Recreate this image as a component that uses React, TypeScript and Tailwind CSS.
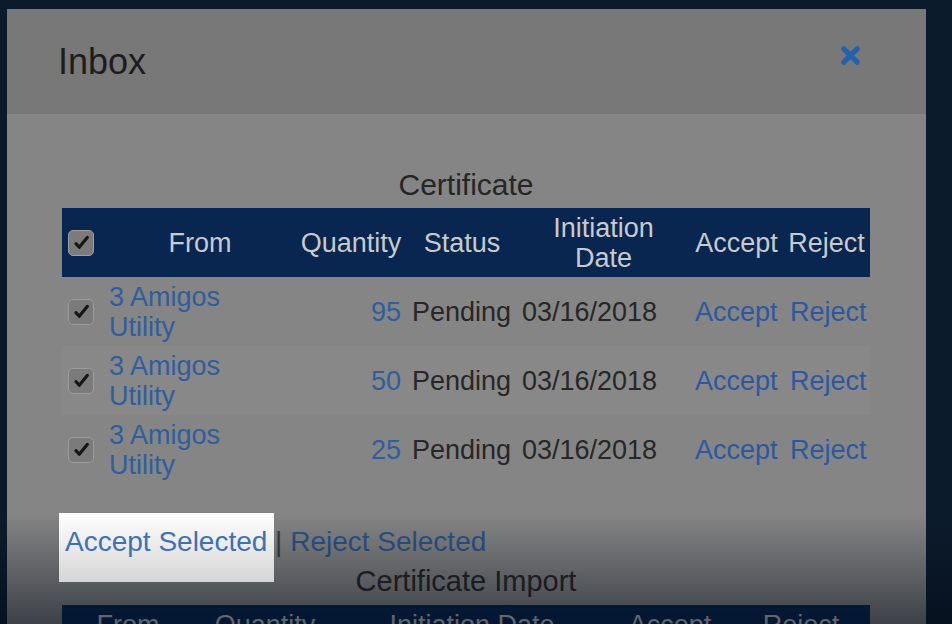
import React from "react";

function Check() {
  return (
    <svg viewBox="0 0 24 24" className="h-[19px] w-[19px]">
      <path
        d="M5 13.5l4.2 4.5L19.5 5.5"
        fill="none"
        stroke="#161616"
        strokeWidth="4"
        strokeLinecap="round"
        strokeLinejoin="round"
      />
    </svg>
  );
}

function Box() {
  return (
    <span className="flex h-[26px] w-[26px] items-center justify-center rounded-[5px] border border-[#9d9d9d] bg-[#7b7b7b]">
      <Check />
    </span>
  );
}

const rows = [95, 50, 25];

export default function App() {
  return (
    <div className="relative h-[624px] w-[952px] overflow-hidden bg-[#0c1b2c] pl-[7px] pt-[9px] font-['Liberation_Sans',Arial,sans-serif]">
      <div className="w-[919px] bg-[#858585]">
        {/* header */}
        <div className="flex h-[105px] items-center justify-between bg-[#787878] pl-[51px] pr-[64px]">
          <span className="text-[36px] leading-[40px] text-[#1d1d1d]">Inbox</span>
          <svg viewBox="0 0 24 24" className="mb-[13px] h-[23px] w-[23px]">
            <path
              d="M5 5L19 19M19 5L5 19"
              fill="none"
              stroke="#2461aa"
              strokeWidth="5.5"
              strokeLinecap="round"
            />
          </svg>
        </div>

        {/* body */}
        <div className="pl-[55px] pr-[56px] pt-[56px]">
          <div className="w-[808px] text-center text-[30px] leading-[30px] text-[#262626]">Certificate</div>
          <table className="mt-[8px] w-[808px] table-fixed border-collapse text-[27px] leading-[30px]">
            <colgroup>
              <col className="w-[43px]" />
              <col className="w-[190px]" />
              <col className="w-[112px]" />
              <col className="w-[110px]" />
              <col className="w-[173px]" />
              <col className="w-[93px]" />
              <col className="w-[87px]" />
            </colgroup>
            <thead>
              <tr className="h-[69px] bg-[#082650] text-[#c9cacc]">
                <th className="pl-[6px] text-left font-normal">
                  <Box />
                </th>
                <th className="font-normal">From</th>
                <th className="font-normal">Quantity</th>
                <th className="font-normal">Status</th>
                <th className="font-normal">
                  Initiation
                  <br />
                  Date
                </th>
                <th className="font-normal">Accept</th>
                <th className="font-normal">Reject</th>
              </tr>
            </thead>
            <tbody>
              {rows.map((q, i) => (
                <tr key={i} className={`h-[69px] ${i === 1 ? "bg-[#888888]" : ""}`}>
                  <td className="pl-[6px]">
                    <Box />
                  </td>
                  <td className="pl-[4px] pr-[8px] text-[#2f5e9f]">3 Amigos Utility</td>
                  <td className="pr-[6px] text-right text-[#2f5e9f]">{q}</td>
                  <td className="pl-[5px] text-[#272727]">Pending</td>
                  <td className="pl-[5px] text-[#272727]">03/16/2018</td>
                  <td className="pl-[5px] text-[#2c58a0]">Accept</td>
                  <td className="pl-[7px] text-[#2c58a0]">Reject</td>
                </tr>
              ))}
            </tbody>
          </table>

          <div className="mt-[43px] whitespace-pre pl-[3px] text-[28px] leading-[30px]">
            <span className="relative z-20 inline-block">
              <span className="absolute -bottom-[25px] -left-[6px] -right-[7px] -top-[14px] bg-linear-to-b from-white to-[#d5d5d5]" />
              <span className="relative text-[#3d71b6]">Accept Selected</span>
            </span>
            <span className="text-[#3e3e3e]"> | </span>
            <span className="text-[#2e548c]">Reject Selected</span>
          </div>

          <div className="mt-[9px] w-[808px] text-center text-[29px] leading-[30px] text-[#262626]">
            Certificate Import
          </div>

          <table className="mt-[9px] w-[808px] table-fixed border-collapse text-[27px] leading-[30px]">
            <colgroup>
              <col className="w-[132px]" />
              <col className="w-[142px]" />
              <col className="w-[272px]" />
              <col className="w-[124px]" />
              <col className="w-[138px]" />
            </colgroup>
            <thead>
              <tr className="bg-[#082650] text-[#c9cacc]">
                <th className="py-[5px] font-normal">From</th>
                <th className="py-[5px] font-normal">Quantity</th>
                <th className="py-[5px] font-normal">Initiation Date</th>
                <th className="py-[5px] font-normal">Accept</th>
                <th className="py-[5px] font-normal">Reject</th>
              </tr>
            </thead>
          </table>
        </div>
      </div>

      {/* bottom fade */}
      <div className="pointer-events-none absolute bottom-0 left-0 right-0 z-10 h-[110px] bg-linear-to-b from-transparent to-[#020a16]/55" />
    </div>
  );
}
